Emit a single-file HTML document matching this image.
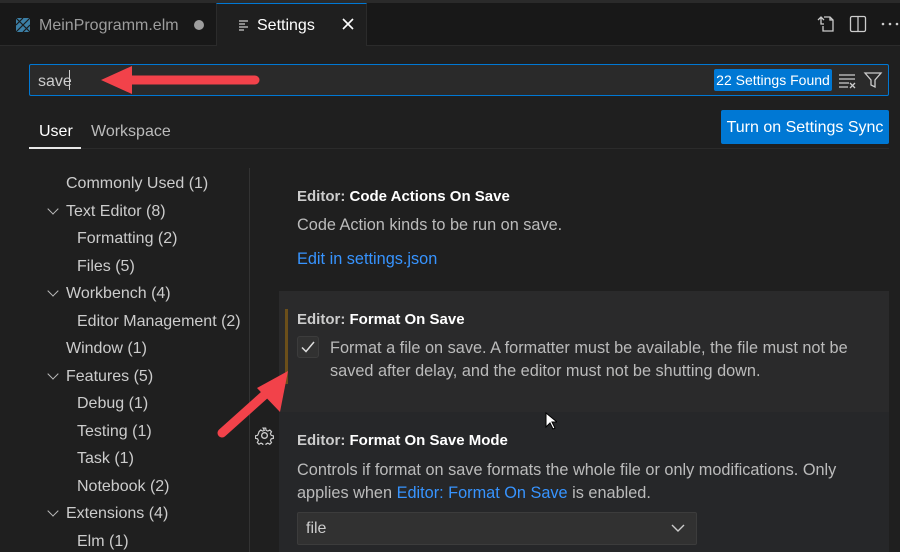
<!DOCTYPE html>
<html><head><style>
*{margin:0;padding:0;box-sizing:border-box}
body{width:900px;height:552px;overflow:hidden;background:#1f1f1f;font-family:"Liberation Sans",sans-serif;color:#ccc;position:relative;font-size:15px}
.a{position:absolute;white-space:nowrap}
.tabbar{position:absolute;left:0;top:0;width:900px;height:46px;background:#181818;border-bottom:1px solid #2b2b2b;border-top:3px solid #2a2a2a}
.tree div{position:absolute;white-space:nowrap;color:#ccc;font-size:16px}
.chev{position:absolute;width:8px;height:8px;border-right:1.5px solid #bbb;border-bottom:1.5px solid #bbb;transform:rotate(45deg)}
.d{font-size:16.3px}
</style></head><body>
<div class="tabbar"></div>
<div class="a" style="left:216px;top:3px;width:151px;height:43px;background:#1f1f1f;border-top:1px solid #0078d4;border-left:1px solid #2b2b2b;border-right:1px solid #2b2b2b"></div>
<svg class="a" style="left:15px;top:17px" width="16" height="16" viewBox="0 0 16 16"><rect x="1" y="1" width="14" height="14" fill="#3c7fa6"/><path d="M1 1L15 15M15 1L1 15M8 1L1 8M8 15L15 8" stroke="#1a1a1a" stroke-width="1.2"/></svg>
<div class="a" style="left:39px;top:17px;color:#9d9d9d;font-size:16px">MeinProgramm.elm</div>
<div class="a" style="left:194px;top:20px;width:10px;height:10px;border-radius:50%;background:#9d9d9d"></div>
<svg class="a" style="left:238px;top:19px" width="12" height="12"><path d="M1 2h9M1 5h6M1 8h9M1 11h5" stroke="#ccc" stroke-width="1.3"/></svg>
<div class="a" style="left:257px;top:17px;color:#fff;font-size:16px">Settings</div>
<svg class="a" style="left:342px;top:18px" width="12" height="12"><path d="M1 1L11 11M11 1L1 11" stroke="#fff" stroke-width="1.6"/></svg>
<svg class="a" style="left:816px;top:14px" width="20" height="20" viewBox="0 0 20 20" fill="none" stroke="#ccc" stroke-width="1.3"><path d="M8 3h6l3 3v11H7V12"/><path d="M14 3v3h3"/><path d="M2 6l3-3 3 3M5 3v7h3"/></svg>
<svg class="a" style="left:849px;top:15px" width="18" height="18" fill="none" stroke="#ccc" stroke-width="1.3"><rect x="1.5" y="1.5" width="15" height="15" rx="1.5"/><path d="M9 2v14"/></svg>
<svg class="a" style="left:881px;top:22px" width="19" height="4"><circle cx="2" cy="2" r="1.3" fill="#ccc"/><circle cx="9" cy="2" r="1.3" fill="#ccc"/><circle cx="16" cy="2" r="1.3" fill="#ccc"/></svg>

<div class="a" style="left:29px;top:64px;width:860px;height:32px;background:#2a2a2a;border:1px solid #0078d4;border-radius:2px"></div>
<div class="a" style="left:38px;top:73px;color:#ccc;font-size:16px">save</div>
<div class="a" style="left:69px;top:70px;width:1px;height:20px;background:#ccc"></div>
<div class="a" style="left:714px;top:69px;width:118px;height:22px;background:#0078d4;border-radius:2px;color:#fff;font-size:14px;line-height:23px;text-align:center">22 Settings Found</div>
<svg class="a" style="left:838px;top:72px" width="20" height="18" fill="none" stroke="#ccc" stroke-width="1.3"><path d="M1 3h16M1 7h16M1 11h10M1 15h9M12 11l5 5M17 11l-5 5"/></svg>
<svg class="a" style="left:863px;top:70px" width="20" height="20" fill="none" stroke="#ccc" stroke-width="1.3"><path d="M2 3h16l-6 7v7l-4-2v-5z"/></svg>

<svg class="a" style="left:95px;top:62px" width="175" height="36"><path d="M30 18H160" stroke="#f2424a" stroke-width="9" stroke-linecap="round"/><path d="M6 18L37 4L37 32Z" fill="#f2424a"/></svg>

<div class="a" style="left:39px;top:123px;color:#fff;font-size:16px">User</div>
<div class="a" style="left:91px;top:123px;color:#bbb;font-size:16px">Workspace</div>
<div class="a" style="left:29px;top:148px;width:860px;height:1px;background:#2b2b2b"></div>
<div class="a" style="left:29px;top:147px;width:52px;height:2px;background:#e7e7e7"></div>
<div class="a" style="left:721px;top:110px;width:168px;height:34px;background:#0078d4;border-radius:2px;color:#fff;line-height:36px;text-align:center;font-size:16px">Turn on Settings Sync</div>

<div class="tree">
<div style="left:66px;top:175px">Commonly Used (1)</div>
<div style="left:66px;top:203px">Text Editor (8)</div>
<div style="left:77px;top:230px">Formatting (2)</div>
<div style="left:77px;top:258px">Files (5)</div>
<div style="left:66px;top:285px">Workbench (4)</div>
<div style="left:77px;top:313px">Editor Management (2)</div>
<div style="left:66px;top:340px">Window (1)</div>
<div style="left:66px;top:368px">Features (5)</div>
<div style="left:77px;top:395px">Debug (1)</div>
<div style="left:77px;top:423px">Testing (1)</div>
<div style="left:77px;top:450px">Task (1)</div>
<div style="left:77px;top:478px">Notebook (2)</div>
<div style="left:66px;top:505px">Extensions (4)</div>
<div style="left:77px;top:533px">Elm (1)</div>
</div>
<div class="chev" style="left:49px;top:205px"></div>
<div class="chev" style="left:49px;top:287px"></div>
<div class="chev" style="left:49px;top:370px"></div>
<div class="chev" style="left:49px;top:507px"></div>
<div class="a" style="left:249px;top:168px;width:1px;height:384px;background:#333"></div>

<div class="a" style="left:297px;top:188px;color:#ccc;font-weight:bold">Editor: <span style="color:#fff">Code Actions On Save</span></div>
<div class="a d" style="left:297px;top:216px;color:#bbb">Code Action kinds to be run on save.</div>
<div class="a d" style="left:297px;top:250px;color:#3794ff">Edit in settings.json</div>

<div class="a" style="left:279px;top:291px;width:610px;height:121px;background:#2a2a2b"></div>
<div class="a" style="left:285px;top:309px;width:3px;height:75px;background:#6b4f1a"></div>
<div class="a" style="left:297px;top:311px;color:#ccc;font-weight:bold">Editor: <span style="color:#fff">Format On Save</span></div>
<div class="a" style="left:297px;top:336px;width:22px;height:22px;background:#313131;border:1px solid #3c3c3c;border-radius:3px"></div>
<svg class="a" style="left:300px;top:339px" width="16" height="16"><path d="M2 8.5l4 4L14 3" stroke="#ddd" stroke-width="1.5" fill="none"/></svg>
<div class="a d" style="left:330px;top:337px;color:#bbb;line-height:23px">Format a file on save. A formatter must be available, the file must not be<br>saved after delay, and the editor must not be shutting down.</div>

<div class="a" style="left:279px;top:412px;width:610px;height:140px;background:#262729"></div>
<div class="a" style="left:297px;top:432px;color:#ccc;font-weight:bold">Editor: <span style="color:#fff">Format On Save Mode</span></div>
<div class="a d" style="left:297px;top:459px;color:#bbb;line-height:23px">Controls if format on save formats the whole file or only modifications. Only<br>applies when <span style="color:#3794ff">Editor: Format On Save</span> is enabled.</div>
<div class="a" style="left:297px;top:512px;width:400px;height:33px;background:#313131;border:1px solid #3c3c3c;border-radius:2px"></div>
<div class="a" style="left:306px;top:520px;color:#ccc;font-size:16px">file</div>
<svg class="a" style="left:671px;top:523px" width="14" height="10"><path d="M1 2l6 6 6-6" stroke="#ccc" stroke-width="1.4" fill="none"/></svg>

<svg class="a" style="left:255px;top:426px" width="19" height="19" viewBox="0 0 20 20" fill="none" stroke="#ccc" stroke-width="1.4"><circle cx="10" cy="10" r="3"/><path d="M8.5 1.5h3l.5 2.5 2 1 2.3-1.3 2 2-1.3 2.3 1 2 2.5.5v3l-2.5.5-1 2 1.3 2.3-2 2-2.3-1.3-2 1-.5 2.5h-3l-.5-2.5-2-1-2.3 1.3-2-2 1.3-2.3-1-2-2.5-.5v-3l2.5-.5 1-2L3.7 5.7l2-2L8 5l2-1z" transform="scale(.9) translate(1 1)"/></svg>

<svg class="a" style="left:210px;top:360px" width="85" height="85"><path d="M12 73L60 30" stroke="#f2424a" stroke-width="9" stroke-linecap="round"/><path d="M78 11L47 28L70 52Z" fill="#f2424a"/></svg>

<svg class="a" style="left:545px;top:412px" width="12" height="19"><path d="M1 1v14l4-4 3 6 2-1-3-6h5z" fill="#fff" stroke="#000" stroke-width="1"/></svg>
</body></html>
